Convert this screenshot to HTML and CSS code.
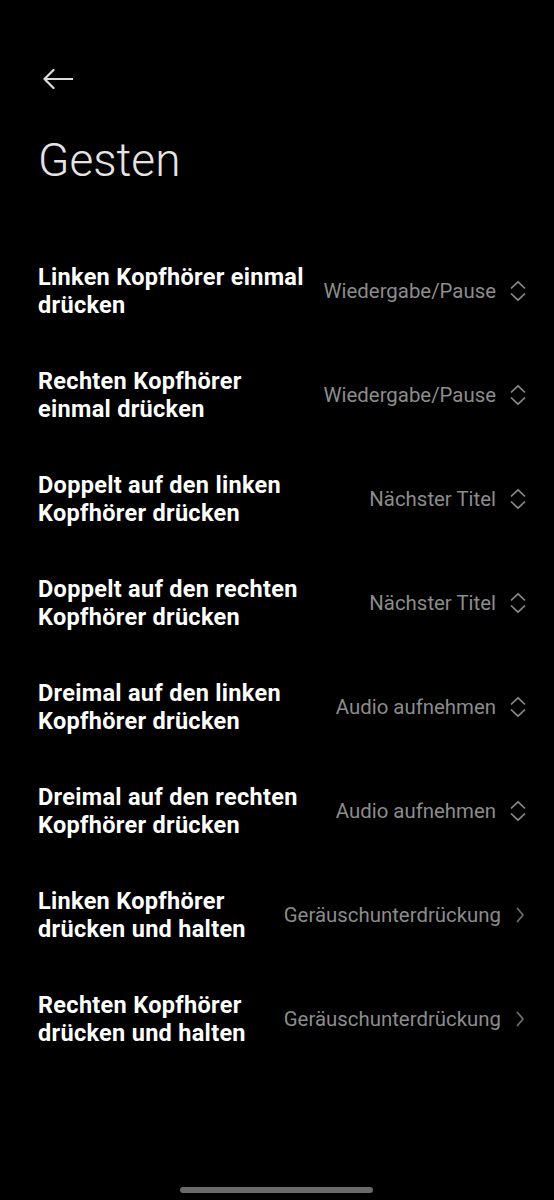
FILE: index.html
```html
<!DOCTYPE HTML>
<html lang="de">
<head>
<meta charset="utf-8" />
<meta name="viewport" content="width=device-width, initial-scale=1.0">
<title>Gesten</title>
<link rel="stylesheet" href="styles.css">
</head>
<body>
<div class="header">
  <button class="back" aria-label="Zurück">
    <svg width="30" height="20" viewBox="0 0 30 20">
      <path d="M1.5 10 H29.5 M10.5 1 L1.5 10 L10.5 19" fill="none" stroke="#dcdcdc" stroke-width="2.2" stroke-linecap="round" stroke-linejoin="round"/>
    </svg>
  </button>
  <h1 class="title">Gesten</h1>
</div>

<div class="list">
  <div class="row">
    <div class="label">Linken Kopfhörer einmal drücken</div>
    <div class="value">Wiedergabe/Pause</div>
    <svg class="icon" width="16" height="22" viewBox="0 0 16 22"><path d="M1.5 8 L8 1.8 L14.5 8 M1.5 14 L8 20.2 L14.5 14" fill="none" stroke="#8a8a8a" stroke-width="1.7" stroke-linecap="round" stroke-linejoin="round"/></svg>
  </div>
  <div class="row">
    <div class="label">Rechten Kopfhörer einmal drücken</div>
    <div class="value">Wiedergabe/Pause</div>
    <svg class="icon" width="16" height="22" viewBox="0 0 16 22"><path d="M1.5 8 L8 1.8 L14.5 8 M1.5 14 L8 20.2 L14.5 14" fill="none" stroke="#8a8a8a" stroke-width="1.7" stroke-linecap="round" stroke-linejoin="round"/></svg>
  </div>
  <div class="row">
    <div class="label">Doppelt auf den linken Kopfhörer drücken</div>
    <div class="value">Nächster Titel</div>
    <svg class="icon" width="16" height="22" viewBox="0 0 16 22"><path d="M1.5 8 L8 1.8 L14.5 8 M1.5 14 L8 20.2 L14.5 14" fill="none" stroke="#8a8a8a" stroke-width="1.7" stroke-linecap="round" stroke-linejoin="round"/></svg>
  </div>
  <div class="row">
    <div class="label">Doppelt auf den rechten Kopfhörer drücken</div>
    <div class="value">Nächster Titel</div>
    <svg class="icon" width="16" height="22" viewBox="0 0 16 22"><path d="M1.5 8 L8 1.8 L14.5 8 M1.5 14 L8 20.2 L14.5 14" fill="none" stroke="#8a8a8a" stroke-width="1.7" stroke-linecap="round" stroke-linejoin="round"/></svg>
  </div>
  <div class="row">
    <div class="label">Dreimal auf den linken Kopfhörer drücken</div>
    <div class="value">Audio aufnehmen</div>
    <svg class="icon" width="16" height="22" viewBox="0 0 16 22"><path d="M1.5 8 L8 1.8 L14.5 8 M1.5 14 L8 20.2 L14.5 14" fill="none" stroke="#8a8a8a" stroke-width="1.7" stroke-linecap="round" stroke-linejoin="round"/></svg>
  </div>
  <div class="row">
    <div class="label">Dreimal auf den rechten Kopfhörer drücken</div>
    <div class="value">Audio aufnehmen</div>
    <svg class="icon" width="16" height="22" viewBox="0 0 16 22"><path d="M1.5 8 L8 1.8 L14.5 8 M1.5 14 L8 20.2 L14.5 14" fill="none" stroke="#8a8a8a" stroke-width="1.7" stroke-linecap="round" stroke-linejoin="round"/></svg>
  </div>
  <div class="row">
    <div class="label">Linken Kopfhörer drücken und halten</div>
    <div class="value">Geräuschunterdrückung</div>
    <svg class="icon chev" width="16" height="22" viewBox="0 0 16 22"><path d="M7.5 4.5 L13 11 L7.5 17.5" fill="none" stroke="#6a6a6a" stroke-width="1.9" stroke-linecap="round" stroke-linejoin="round"/></svg>
  </div>
  <div class="row">
    <div class="label">Rechten Kopfhörer drücken und halten</div>
    <div class="value">Geräuschunterdrückung</div>
    <svg class="icon chev" width="16" height="22" viewBox="0 0 16 22"><path d="M7.5 4.5 L13 11 L7.5 17.5" fill="none" stroke="#6a6a6a" stroke-width="1.9" stroke-linecap="round" stroke-linejoin="round"/></svg>
  </div>
</div>

<div class="homebar"></div>
</body>
</html>
```

FILE: styles.css
```css
body {
  margin: 0;
  background: #000;
  color: #fff;
  font-family: Roboto, "Noto Sans", "Liberation Sans", sans-serif;
}

.header {
  padding: 69px 0 0 43px;
}
.back {
  display: block;
  width: 30px;
  height: 20px;
  padding: 0;
  border: none;
  background: transparent;
  cursor: pointer;
}
.back svg { display: block; }

.title {
  margin: 44px 0 0 -5px;
  font-size: 46px;
  font-weight: 300;
  line-height: 54px;
  color: #e4e4e4;
}

/* settings rows */
.list {
  margin-top: 52px;
}
.row {
  display: flex;
  align-items: center;
  height: 56px;
  padding: 24px 28px 24px 38px;
}
.label {
  flex: 1;
  font-size: 23.5px;
  font-weight: 700;
  letter-spacing: 0.3px;
  line-height: 28px;
  padding-right: 16px;
}
.value {
  flex-shrink: 0;
  font-size: 20.4px;
  color: #8c8c8c;
  white-space: nowrap;
}
.icon {
  flex-shrink: 0;
  margin-left: 14px;
  display: block;
}
.chev {
  margin-left: 9px;
}

.homebar {
  position: fixed;
  left: 180px;
  bottom: 7px;
  width: 193px;
  height: 6px;
  border-radius: 3px;
  background: #6a6a6a;
}
```
